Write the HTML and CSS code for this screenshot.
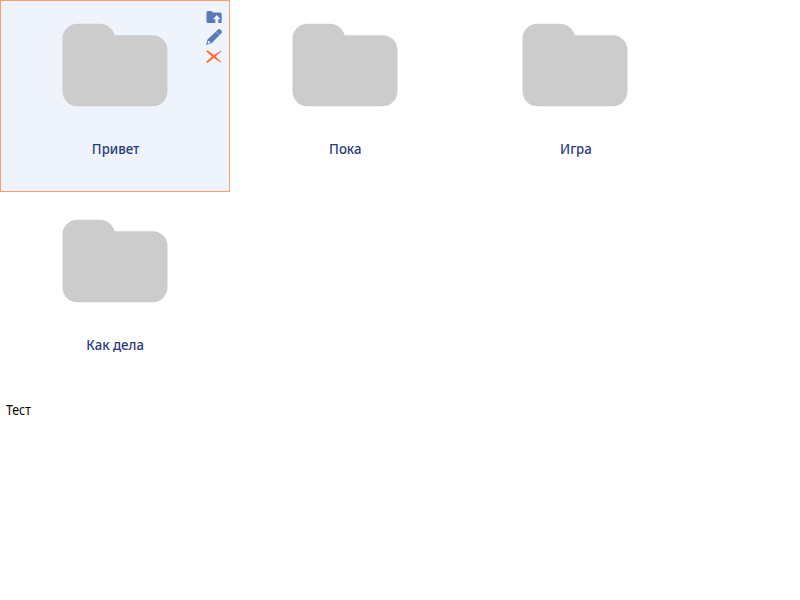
FILE: index.html
```html
<!DOCTYPE html>
<html lang="ru">
<head>
<meta charset="utf-8">
<title>Папки</title>
<link rel="stylesheet" href="styles.css">
</head>
<body>
<svg class="defs" width="0" height="0">
  <symbol id="folder" viewBox="0 0 106 84"><path d="M15.500 .7H37.500C45 .7 50.500 5.300 52.800 12.200H90.500A15 15 0 0 1 105.500 27.200V68.300A15 15 0 0 1 90.500 83.300H15.500A15 15 0 0 1 .5 68.300V15.700A15 15 0 0 1 15.500 .7Z"/></symbol>
</svg>
<main class="folders">
  <article class="card selected">
    <svg class="folder"><use href="#folder"/></svg>
    <h2 class="name">Привет</h2>
    <div class="actions">
      <svg class="action" viewBox="0 0 16 16"><path fill-rule="evenodd" d="M2 2H5.500L7.300 3.500H14Q15.700 3.500 15.700 5.200V12.500Q15.700 14 14.200 14H2Q.5 14 .5 12.500V3.500Q.5 2 2 2ZM10.800 6L7 10.300H9.300V14H12.300V10.300H14.600Z"/></svg>
      <svg class="action" viewBox="0 0 16 16"><path fill-rule="evenodd" d="M12 .5Q13.200-.5 14.300 .5L15.500 1.700Q16.500 3 15.500 4L13.600 5.900L10 2.500ZM9.800 2.700L13.400 6.200L5.800 14L0 16L1.700 10.300ZM2.500 11.700L1.500 13.800L2.300 14.600L4.600 13.500L4.200 12.400L3.100 12.200Z"/></svg>
      <svg class="action remove" viewBox="0 0 16 16"><path d="M0 2.300L1.500 1.300L8 6L14.800 1.800L15.300 2.200L9.500 7.500L15.300 13L14.800 13.400L7.800 9L1.500 14L0 13L6 7.500Z"/></svg>
    </div>
  </article>
  <article class="card">
    <svg class="folder"><use href="#folder"/></svg>
    <h2 class="name">Пока</h2>
  </article>
  <article class="card">
    <svg class="folder"><use href="#folder"/></svg>
    <h2 class="name">Игра</h2>
  </article>
  <article class="card">
    <svg class="folder"><use href="#folder"/></svg>
    <h2 class="name">Как дела</h2>
  </article>
</main>
<p class="note">Тест</p>
</body>
</html>
```
FILE: styles.css
```css
body {
  margin: 0;
  background: #fff;
  font-family: "Noto Sans", "Open Sans", sans-serif;
}

.defs {
  position: absolute;
}

.folders {
  display: grid;
  grid-template-columns: repeat(3, 230px);
  grid-auto-rows: 192px;
  row-gap: 4px;
}

.card {
  position: relative;
  box-sizing: border-box;
  display: flex;
  flex-direction: column;
  align-items: center;
  border: 1px solid transparent;
  padding-top: 22px;
}

.selected {
  background: #eff4fc;
  border-color: #ff9a6c;
}

.folder {
  width: 106px;
  height: 84px;
  fill: #ccc;
}

.name {
  margin: 31px 0 0;
  color: #293a7d;
  font-size: 14.500px;
  font-weight: 500;
  line-height: 20px;
  transform: translateX(0.500px) scaleX(0.910);
}

.actions {
  position: absolute;
  top: 8px;
  right: 7px;
  display: flex;
  flex-direction: column;
  gap: 4px;
}

.action {
  width: 16px;
  height: 16px;
  fill: #587ab5;
}

.remove {
  fill: #ff6b32;
}

.note {
  margin: 12px 0 0 6px;
  color: #000;
  font-size: 13.500px;
  line-height: 20px;
  transform: scaleX(0.910);
  transform-origin: left;
}
```
